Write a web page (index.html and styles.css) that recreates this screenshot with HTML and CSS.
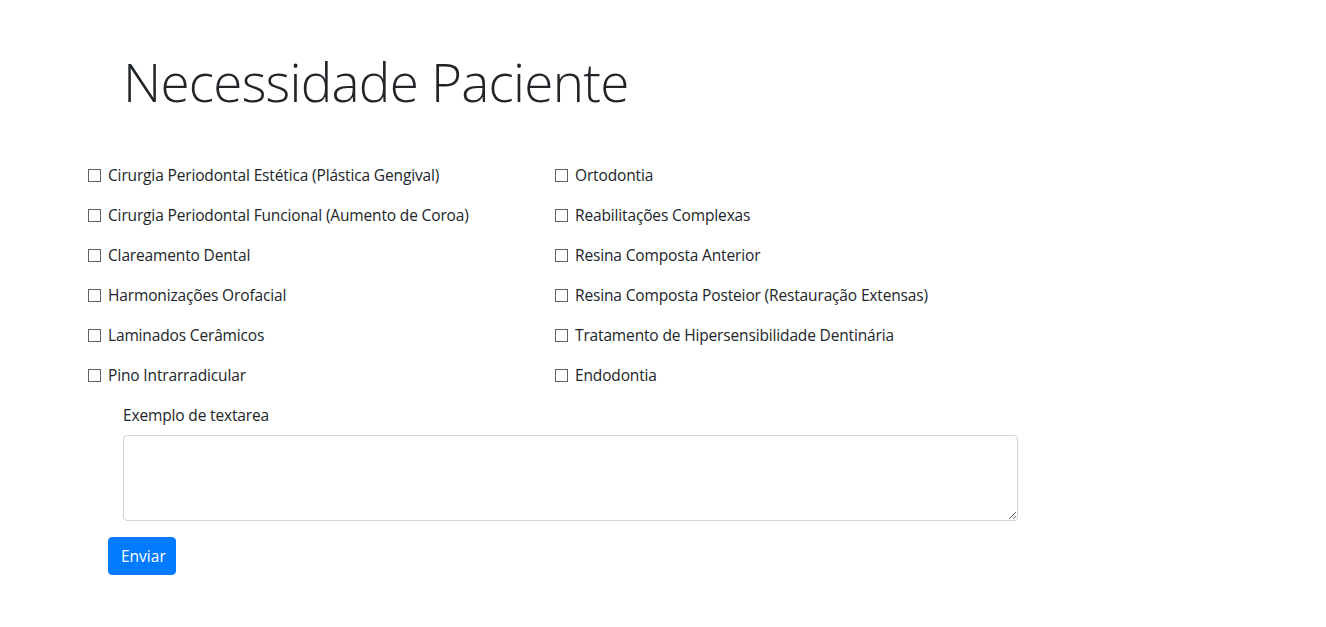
FILE: index.html
```html
<!DOCTYPE html>
<html lang="pt-BR">
<head>
<meta charset="utf-8">
<title>Necessidade Paciente</title>
<link rel="stylesheet" href="styles.css">
</head>
<body>
<div class="container">
  <h1 class="title">Necessidade Paciente</h1>
  <form class="form">
    <div class="checks">
      <label class="check"><input type="checkbox"><span>Cirurgia Periodontal Estética (Plástica Gengival)</span></label>
      <label class="check"><input type="checkbox"><span>Ortodontia</span></label>
      <label class="check"><input type="checkbox"><span>Cirurgia Periodontal Funcional (Aumento de Coroa)</span></label>
      <label class="check"><input type="checkbox"><span>Reabilitações Complexas</span></label>
      <label class="check"><input type="checkbox"><span>Clareamento Dental</span></label>
      <label class="check"><input type="checkbox"><span>Resina Composta Anterior</span></label>
      <label class="check"><input type="checkbox"><span>Harmonizações Orofacial</span></label>
      <label class="check"><input type="checkbox"><span>Resina Composta Posteior (Restauração Extensas)</span></label>
      <label class="check"><input type="checkbox"><span>Laminados Cerâmicos</span></label>
      <label class="check"><input type="checkbox"><span>Tratamento de Hipersensibilidade Dentinária</span></label>
      <label class="check"><input type="checkbox"><span>Pino Intrarradicular</span></label>
      <label class="check"><input type="checkbox"><span>Endodontia</span></label>
    </div>
    <div class="group">
      <label class="group-label" for="ta">Exemplo de textarea</label>
      <textarea id="ta" class="textarea" rows="3"></textarea>
    </div>
    <button type="button" class="btn">Enviar</button>
  </form>
</div>
</body>
</html>
```

FILE: styles.css
```css
* { box-sizing: border-box; }
body {
  margin: 0;
  font-family: "Open Sans", "Noto Sans", sans-serif;
  font-size: 15.5px;
  letter-spacing: -0.15px;
  color: #212529;
  background: #fff;
}
.container {
  width: 1140px;
  margin: 0 auto;
  padding: 0 15px;
}
.title {
  margin: 48px 0 0 15px;
  font-size: 53px;
  letter-spacing: -0.75px;
  font-weight: 300;
  line-height: 67px;
}
.form {
  margin-top: 40px;
}
.checks {
  display: grid;
  grid-template-columns: 467px 467px;
  margin-left: -20px;
}
.check {
  display: flex;
  align-items: center;
  height: 40px;
  line-height: 24px;
}
.check input {
  appearance: none;
  -webkit-appearance: none;
  width: 13px;
  height: 13px;
  margin: 0 7px 0 0;
  border: 1px solid #5f5f5f;
  border-radius: 0;
  background: #fff;
}
.group {
  margin: 8px 0 0 15px;
  width: 895px;
}
.group-label {
  display: block;
  line-height: 24px;
  margin-bottom: 8px;
}
.textarea {
  display: block;
  width: 895px;
  height: 86px;
  border: 1px solid #ced4da;
  border-radius: 4px;
  font: inherit;
  padding: 6px 12px;
}
.btn {
  margin-top: 16px;
  background: #007bff;
  color: #fff;
  border: 1px solid #007bff;
  border-radius: 4px;
  font: inherit;
  line-height: 24px;
  padding: 6px 12px;
  width: 68px;
  height: 38px;
}
```
